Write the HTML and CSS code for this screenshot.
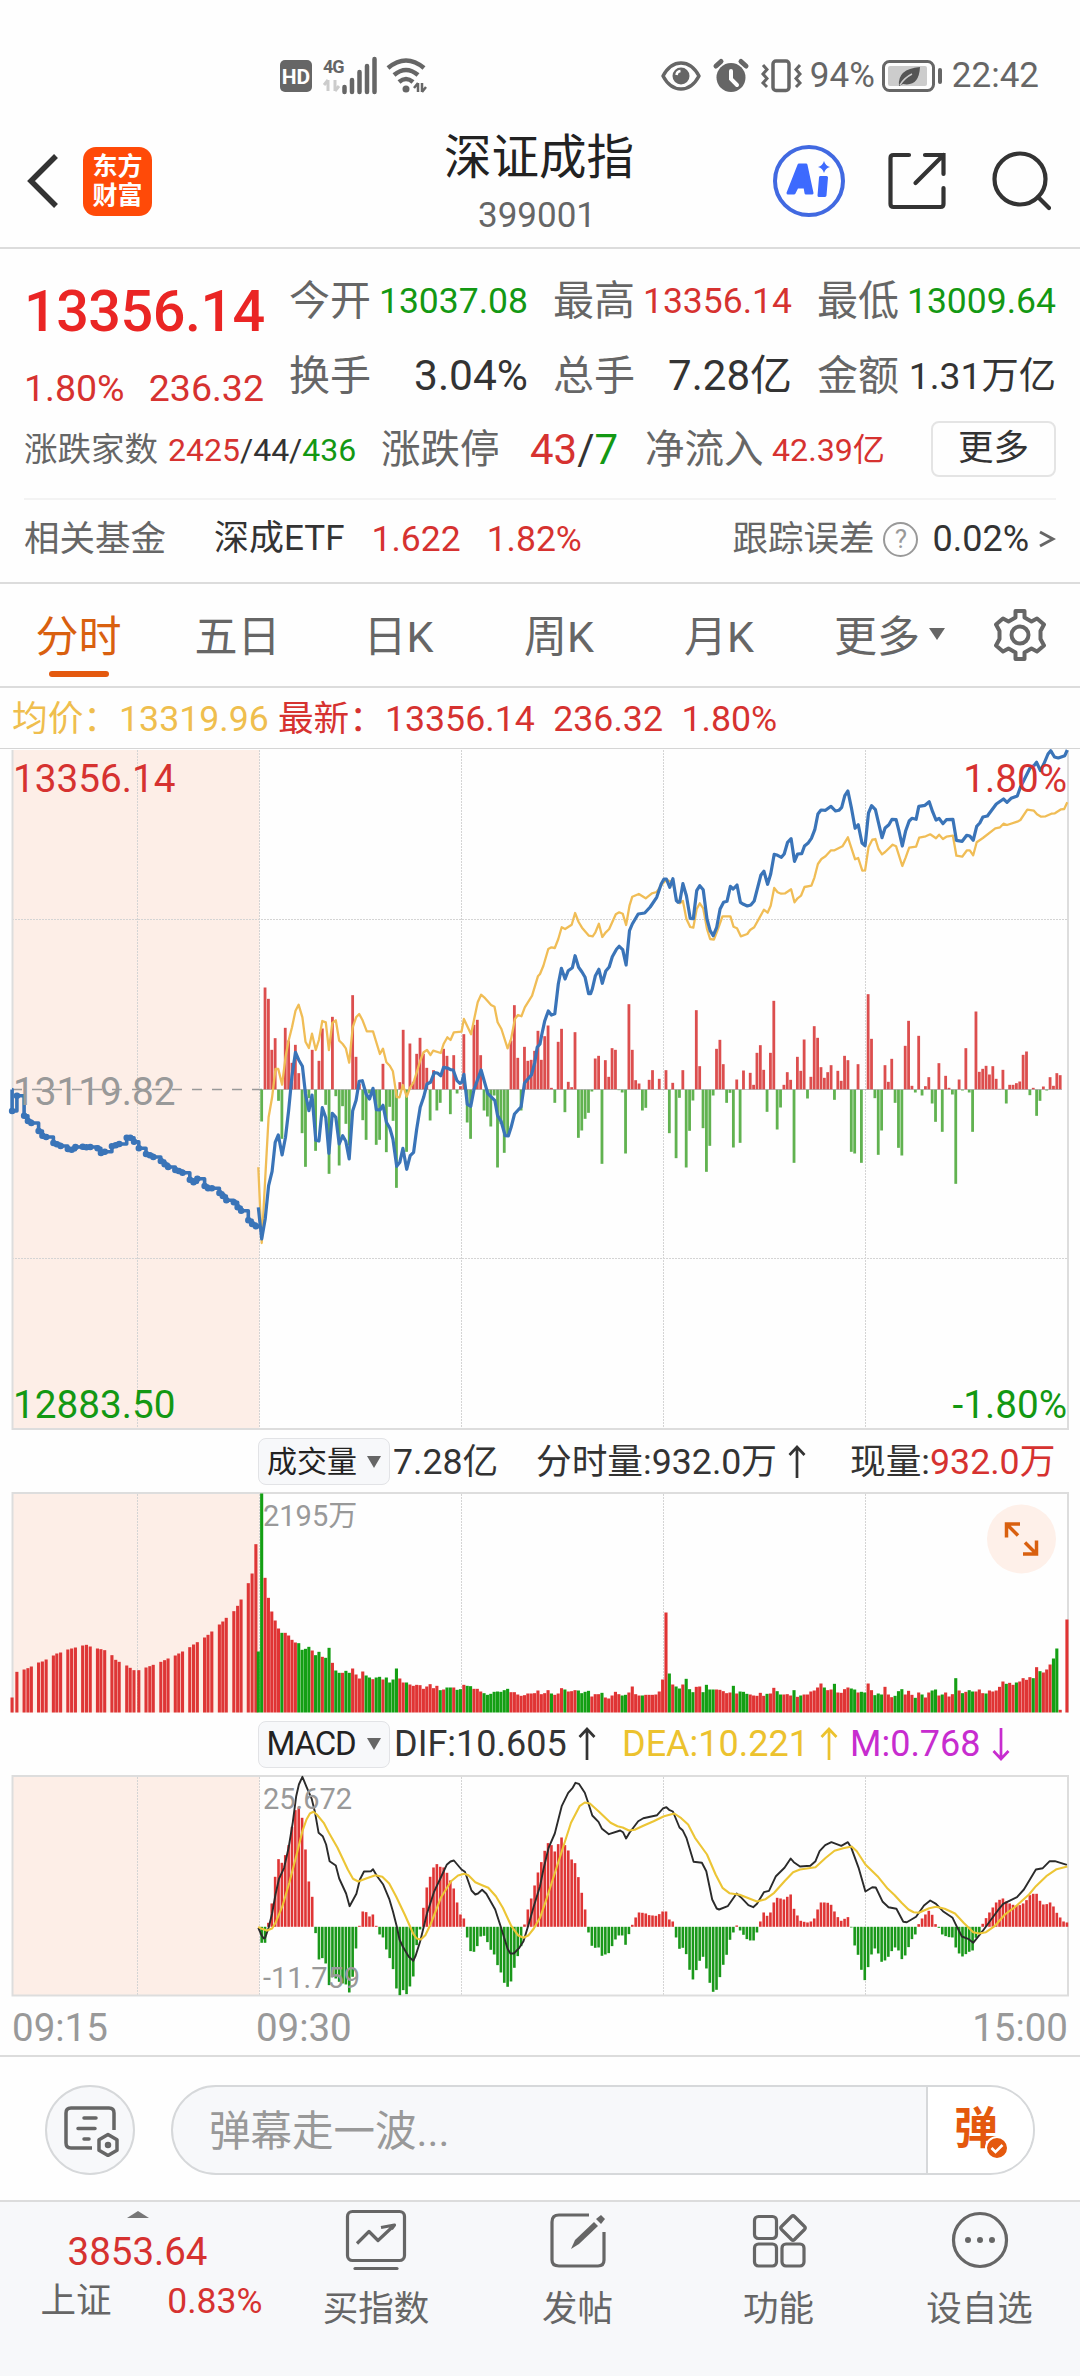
FILE: index.html
```html
<!DOCTYPE html>
<html lang="zh-CN">
<head>
<meta charset="utf-8">
<title>深证成指 399001</title>
<link rel="stylesheet" href="styles.css">
</head>
<body>
<div class="app">
  <header class="status">
    <div class="status-left">
      <svg width="150" height="42" viewBox="0 -4 150 42">
        <rect x="1" y="3" width="32" height="32" rx="5" fill="#666"/>
        <text x="17" y="27" text-anchor="middle" class="hd">HD</text>
        <text x="44" y="16" class="net">4G</text>
        <path d="M49 23v11M49 23l-4 5M56 23v11M56 34l4-5" stroke="#ccc" stroke-width="3" fill="none"/>
        <path d="M65.500 30v5M73 23v12M80.500 15v20M88 9v26M95.500 2v33" stroke="#666" stroke-width="4.500" stroke-linecap="round"/>
        <path d="M109 11q18-15 36 0M115 18q12-10 24 0M120 25q7-6 14 0" stroke="#666" stroke-width="4.500" fill="none"/>
        <circle cx="127" cy="32" r="3.500" fill="#666"/>
        <path d="M139 26v9M139 26l-4 5M143 26v9M143 35l4-5" stroke="#666" stroke-width="2.500" fill="none"/>
      </svg>
    </div>
    <div class="status-right">
      <svg width="144" height="38" viewBox="0 0 144 38">
        <path d="M2 19q7-13 18-13t18 13q-7 13-18 13T2 19Z" fill="none" stroke="#666" stroke-width="3.500" stroke-linejoin="round"/>
        <circle cx="20" cy="19" r="8.500" fill="#666"/><path d="M15.500 18a4.500 4.500 0 0 1 4-4" stroke="#fff" stroke-width="2.500" fill="none"/>
        <circle cx="70" cy="20.500" r="14.500" fill="#666"/>
        <path d="M70 14v8l6 6" stroke="#fff" stroke-width="4" fill="none" stroke-linecap="round"/>
        <path d="M55 9l5-4.500M85 9l-5-4.500" stroke="#666" stroke-width="5" stroke-linecap="round"/>
        <rect x="112" y="4" width="16" height="29.500" rx="3" fill="none" stroke="#666" stroke-width="3.500"/>
        <path d="M102 8l4 4.500-4 4.500 4 4.500-4 4.500 4 4M139 8l-4 4.500 4 4.500-4 4.500 4 4.500-4 4" stroke="#666" stroke-width="3" fill="none"/>
      </svg>
      <span class="status-text battery-text">94%</span>
      <svg width="60" height="34" viewBox="0 0 60 34">
        <rect x="1.500" y="2.500" width="50" height="29" rx="6" fill="none" stroke="#666" stroke-width="3"/>
        <rect x="6" y="7" width="39" height="20" rx="2" fill="#ccc"/>
        <path d="M17 27q-2-17 21-19q-1 20-17 17z" fill="#555"/><path d="M18 26q4-7 12-11" stroke="#ccc" stroke-width="1.500" fill="none"/>
        <path d="M58 11v12" stroke="#666" stroke-width="4" stroke-linecap="round"/>
      </svg>
      <span class="status-text clock">22:42</span>
    </div>
  </header>

  <div class="titlebar">
    <div class="title-left">
      <svg width="34" height="58" viewBox="0 0 34 58"><path d="M31 4L6 29l25 25" fill="none" stroke="#333" stroke-width="5.500"/></svg>
      <div class="brand"><span>东方</span><span>财富</span></div>
    </div>
    <div class="title-mid">
      <h1>深证成指</h1>
      <p>399001</p>
    </div>
    <div class="title-right">
      <svg width="72" height="72" viewBox="0 0 72 72">
        <circle cx="36" cy="36" r="34" fill="none" stroke="#4169e1" stroke-width="4"/>
        <path d="M26 20h7l6 28h-6l-1-6h-8l-3 6h-6zM26.500 36h4l-1-7z" fill="#3d6afe" fill-rule="evenodd" stroke="#3d6afe" stroke-width="3" stroke-linejoin="round"/>
        <path d="M47.500 32.500h6l-1.500 18h-6z" fill="#3d6afe" stroke="#3d6afe" stroke-width="3" stroke-linejoin="round"/>
        <path d="M51 16q1.500 5 6 6q-4.500 1-6 6q-1.500-5-6-6q4.500-1 6-6z" fill="#3d6afe"/>
      </svg>
      <svg width="60" height="60" viewBox="0 0 60 60" fill="none" stroke="#333" stroke-width="4.200">
        <path d="M22 4H6.500Q3.500 4 3.500 7v46q0 3 3 3h47q3 0 3-3V37M38 4h18.500v19M56.500 4L28.500 32" stroke-linecap="round"/>
      </svg>
      <svg width="60" height="62" viewBox="0 0 60 62" fill="none" stroke="#333" stroke-width="4.200" stroke-linecap="round">
        <circle cx="29" cy="29" r="25.500"/><path d="M47 47l11 11"/>
      </svg>
    </div>
  </div>

  <section class="quote">
    <div class="quote-top">
      <div class="quote-main">
        <div class="last red">13356.14</div>
        <div class="change red"><span>1.80%</span><span>236.32</span></div>
      </div>
      <div class="quote-grid">
        <div class="cell"><span class="label">今开</span><b class="v36 green">13037.08</b></div>
        <div class="cell"><span class="label">最高</span><b class="v36 red">13356.14</b></div>
        <div class="cell"><span class="label">最低</span><b class="v36 green">13009.64</b></div>
        <div class="cell"><span class="label">换手</span><b class="v43">3.04%</b></div>
        <div class="cell"><span class="label">总手</span><b class="v41">7.28亿</b></div>
        <div class="cell"><span class="label">金额</span><b class="v37">1.31万亿</b></div>
      </div>
    </div>
    <div class="breadth">
      <span class="lab-s">涨跌家数</span>
      <span class="updown"><i class="red">2425</i>/44/<i class="green">436</i></span>
      <span class="lab-m">涨跌停</span>
      <span class="limit"><i class="red">43</i>/<i class="green">7</i></span>
      <span class="lab-m">净流入</span>
      <span class="inflow red">42.39亿</span>
      <span class="more">更多</span>
    </div>
    <div class="fund">
      <span class="grey">相关基金</span>
      <span class="etf">深成ETF</span>
      <span class="red etf-price">1.622</span>
      <span class="red">1.82%</span>
      <span class="grey track">跟踪误差</span>
      <span class="help">?</span>
      <span class="err">0.02%</span>
      <svg width="18" height="20" viewBox="0 0 18 20"><path d="M2 3l13 7-13 7" fill="none" stroke="#666" stroke-width="3"/></svg>
    </div>
  </section>

  <nav class="tabs">
    <span class="tab active">分时</span>
    <span class="tab">五日</span>
    <span class="tab">日K</span>
    <span class="tab">周K</span>
    <span class="tab">月K</span>
    <span class="tab tab-more">更多<i class="caret"></i></span>
    <svg class="gear" width="54" height="54" viewBox="0 0 54 54" fill="none" stroke="#666" stroke-width="4" stroke-linejoin="round">
      <path d="M22.500 3h9v6.500l7 4 5.500-3 7 6-3.500 6.500v8l3.500 6.500-7 6-5.500-3-7 4V51h-9v-6.500l-7-4-5.500 3-7-6 3.500-6.500v-8L3 16.500l7-6 5.500 3 7-4z"/>
      <circle cx="27" cy="27" r="8.500"/>
    </svg>
  </nav>

  <div class="legend">
    <span class="avg">均价：13319.96</span>
    <span class="red now">最新：13356.14</span>
    <span class="red">236.32</span>
    <span class="red">1.80%</span>
  </div>

  <svg class="chart" width="1080" height="682" viewBox="0 749 1080 682">
    <rect x="12" y="751" width="247.500" height="679" class="auction"/>
    <path class="grid" d="M137.500 751V1430M259.500 751V1430M461.500 751V1430M663.500 751V1430M865.500 751V1430M12 920.500H1068M12 1259.500H1068"/>
    <path class="frame" d="M12.500 751V1430H1068V751"/>
    <path d="M0 749.500H1080" stroke="#d5d5d5"/>
    <path d="M12 1090.500H262" stroke="#999" stroke-width="1.500" stroke-dasharray="10 10"/>
    <g id="force"></g>
    <path d="M262 1090.500H1062" stroke="#999" stroke-width="1" opacity=".6"/>
    <path id="avg" class="line" stroke="#f0bd56" stroke-width="2.300"/>
    <path id="auction" class="line" stroke="#3a74b8" stroke-width="3.600"/>
    <path id="auctionDots" class="line" stroke="#3a74b8" stroke-width="6.500" stroke-linecap="round"/>
    <path id="price" class="line" stroke="#3a74b8" stroke-width="3.200"/>
    <text x="13" y="793" class="axis red">13356.14</text>
    <text x="13" y="1106" class="axis muted">13119.82</text>
    <text x="13" y="1419" class="axis green">12883.50</text>
    <text x="1067" y="793" text-anchor="end" class="axis red">1.80%</text>
    <text x="1067" y="1419" text-anchor="end" class="axis green">-1.80%</text>
  </svg>

  <div class="ind-head">
    <span class="picker">成交量<i class="caret"></i></span>
    <span class="vol-total">7.28亿</span>
    <span class="vol-min">分时量:932.0万<svg class="arrow" width="18" height="34" viewBox="0 0 18 34"><path d="M9 33V2M1.500 10L9 2l7.500 8"/></svg></span>
    <span class="vol-now">现量:<i class="red">932.0万</i></span>
  </div>

  <svg class="chart" width="1080" height="222" viewBox="0 1492.500 1080 222">
    <rect x="12" y="1493" width="247.500" height="220" class="auction"/>
    <path class="grid" d="M137.500 1494V1713M259.500 1494V1713M461.500 1494V1713M663.500 1494V1713M865.500 1494V1713"/>
    <path class="frame" d="M12.500 1713V1493.500H1068V1713"/>
    <g id="volume"></g>
    <text x="263" y="1526" class="scale">2195万</text>
    <circle cx="1021.500" cy="1539.500" r="34.500" fill="#fef0e9"/>
    <path d="M1018 1536l-11-11M1006.500 1538v-13.500H1020M1025 1543l11 11M1036.500 1541v13.500H1023" fill="none" stroke="#d9600f" stroke-width="3.500"/>
  </svg>

  <div class="ind-head macd-head">
    <span class="picker">MACD<i class="caret"></i></span>
    <span class="dif">DIF:10.605<svg class="arrow" width="18" height="34" viewBox="0 0 18 34"><path d="M9 33V2M1.500 10L9 2l7.500 8"/></svg></span>
    <span class="dea">DEA:10.221<svg class="arrow" width="18" height="34" viewBox="0 0 18 34"><path d="M9 33V2M1.500 10L9 2l7.500 8"/></svg></span>
    <span class="macd">M:0.768<svg class="arrow" width="18" height="34" viewBox="0 0 18 34"><path d="M9 1v31M1.500 24L9 32l7.500-8"/></svg></span>
  </div>

  <svg class="chart" width="1080" height="222" viewBox="0 1775.500 1080 222">
    <rect x="12" y="1776" width="247.500" height="220" class="auction"/>
    <path class="grid" d="M137.500 1777V1995M259.500 1777V1995M461.500 1777V1995M663.500 1777V1995M865.500 1777V1995"/>
    <path class="frame" d="M12.500 1776.500H1068V1996H12.500Z"/>
    <g id="macdBars"></g>
    <path id="dif" class="line" stroke="#2b2b2b" stroke-width="1.900"/>
    <path id="dea" class="line" stroke="#ecc535" stroke-width="2.100"/>
    <text x="263" y="1809" class="scale">25.672</text>
    <text x="263" y="1988" class="scale">-11.759</text>
  </svg>

  <div class="times"><span>09:15</span><span class="open">09:30</span><span class="close">15:00</span></div>

  <div class="danmu">
    <div class="danmu-set">
      <svg width="58" height="54" viewBox="0 0 58 54" fill="none" stroke="#666" stroke-width="3.500" stroke-linejoin="round">
        <path d="M31 45H10q-5 0-5-5V10q0-5 5-5h38q5 0 5 5v17"/>
        <path d="M23 15h12M17 25.500h17M23 36h5" stroke-linecap="round"/>
        <path d="M47 31.500l9 5.200v10.600L47 52.500l-9-5.200V36.700z"/><circle cx="47" cy="42" r="1.500"/>
      </svg>
    </div>
    <div class="danmu-input">
      <span class="placeholder">弹幕走一波...</span>
      <span class="danmu-btn">弹<svg class="tick" width="24" height="24" viewBox="0 0 24 24"><circle cx="12" cy="12" r="11" fill="#e4590e" stroke="#fff" stroke-width="2"/><path d="M6.500 12l4 4 7-7" fill="none" stroke="#fff" stroke-width="2.600"/></svg></span>
    </div>
  </div>

  <footer class="bottom">
    <div class="mini">
      <i class="up"></i>
      <div class="mini-val red">3853.64</div>
      <div class="mini-row"><span>上证</span><span class="red">0.83%</span></div>
    </div>
    <div class="item">
      <svg width="62" height="62" viewBox="0 0 62 62" fill="none" stroke="#666" stroke-width="3.200">
        <rect x="2.500" y="2.500" width="57" height="49" rx="5"/><path d="M10 59.500h42" stroke-linecap="round"/>
        <path d="M12 34.500l12-12 9 9L49 16.500M36 18.500l13.500-2.500-3 4" stroke-linejoin="round"/>
      </svg><span>买指数</span>
    </div>
    <div class="item">
      <svg width="62" height="62" viewBox="0 0 62 62" fill="none" stroke="#666" stroke-width="3.200">
        <path d="M42 6H12q-7 0-7 7v38q0 6 7 6h39q6 0 6-6V23"/><path d="M24 40l4-9L47 13l4 4-19 18z" fill="#666" stroke="none"/><path d="M49 10l5-4 4 4-4 5z" fill="#666" stroke="none"/>
      </svg><span>发帖</span>
    </div>
    <div class="item">
      <svg width="62" height="62" viewBox="0 0 62 62" fill="none" stroke="#666" stroke-width="3.200">
        <rect x="6.500" y="7.500" width="22" height="22" rx="4"/><rect x="6.500" y="35" width="22" height="22" rx="4"/><rect x="34" y="35" width="22" height="22" rx="4"/>
        <path d="M43.500 7.500q1.500-1.500 3 0l10 10q1.500 1.500 0 3l-10 10q-1.500 1.500-3 0l-10-10q-1.500-1.500 0-3z"/>
      </svg><span>功能</span>
    </div>
    <div class="item">
      <svg width="62" height="62" viewBox="0 0 62 62" fill="none" stroke="#666" stroke-width="3.200">
        <circle cx="31" cy="31" r="26.500"/><g fill="#666" stroke="none"><circle cx="19" cy="31" r="3"/><circle cx="31" cy="31" r="3"/><circle cx="43" cy="31" r="3"/></g>
      </svg><span>设自选</span>
    </div>
  </footer>
</div>
<script src="charts.js"></script>
</body>
</html>
```
FILE: styles.css
```css
* { box-sizing: border-box; }
body { margin: 0; background: #fff; }
i { font-style: normal; }
b { font-weight: 400; }
.app {
  width: 1080px; height: 2376px; display: flex; flex-direction: column; overflow: hidden;
  font-family: Roboto, "Noto Sans CJK SC", sans-serif; color: #333; background: #fefefe;
  white-space: nowrap;
}
.app > * { flex: none; }
svg { display: block; flex: none; }
.red { color: #d63230; fill: #d63230; }
.green { color: #139813; fill: #139813; }
.grey { color: #666; }
.muted { fill: #999; }

.status { height: 110px; padding: 40px 41px 0 279px; display: flex; justify-content: space-between; }
.status-left { padding-top: 13px; }
.status-right { display: flex; align-items: center; height: 70px; color: #666; padding-top: 2px; }
.status-text { font-size: 35px; line-height: 60px; }
.battery-text { margin: 0 7px 0 5px; }
.clock { margin-left: 10px; }
.hd { font: 700 21px Roboto; fill: #fff; }
.net { font: 700 18px Roboto; fill: #666; letter-spacing: -1px; }

.titlebar { height: 139px; border-bottom: 2px solid #dcdcdc; display: grid; grid-template-columns: 400px 274px 1fr; }
.title-left { display: flex; align-items: center; padding: 3px 0 0 25px; height: 145px; margin-top: -3px; }
.brand {
  width: 69px; height: 69px; margin-left: 24px; border-radius: 13px; background: #ff4a08; color: #fff;
  display: flex; flex-direction: column; align-items: center; justify-content: center;
  font-size: 25px; line-height: 29px; font-weight: 700;
}
.title-mid { text-align: center; }
.title-mid h1 { margin: 16px 0 0; font-size: 47.500px; line-height: 64px; font-weight: 400; color: #222; padding-left: 4px; }
.title-mid p { margin: 6px 0 0; font-size: 35px; line-height: 40px; color: #666; }
.title-right { display: flex; align-items: center; padding-left: 99px; height: 142px; }
.title-right svg + svg { margin-left: 42px; }
.title-right svg + svg + svg { margin-left: 44px; }

.quote { height: 335px; border-bottom: 2px solid #dcdcdc; padding: 14px 24px 0; }
.quote-top { display: flex; height: 151px; }
.quote-main { width: 265px; padding-top: 12px; }
.last { font-size: 57.500px; line-height: 74px; font-weight: 500; color: #ea2524; letter-spacing: -.5px; }
.change { width: 240px; display: flex; justify-content: space-between; font-size: 37.500px; line-height: 50px; padding-top: 14px; }
.quote-grid { display: grid; grid-template-columns: repeat(3, 239px); column-gap: 25px; grid-auto-rows: 75.500px; flex: 1; }
.cell { display: flex; justify-content: space-between; align-items: center; line-height: 74px; }
.label { font-size: 41px; color: #666; }
.v36 { font-size: 35.500px; } .v37 { font-size: 37.300px; } .v41 { font-size: 42px; } .v43 { font-size: 42.500px; }
.breadth { height: 85px; display: flex; align-items: center; line-height: 60px; padding-bottom: 14px; }
.lab-s { font-size: 33.500px; color: #666; width: 144px; }
.updown { font-size: 32px; width: 213px; }
.lab-m { font-size: 39.500px; color: #666; width: 118px; }
.limit { font-size: 42px; width: 146px; padding-left: 31px; }
.inflow { font-size: 32.200px; padding-left: 9px; }
.more { width: 125px; height: 56px; margin-left: auto; border: 2px solid #e4e4e4; border-radius: 8px; font-size: 35.500px; line-height: 51px; text-align: center; position: relative; top: -1px; }
.fund { height: 83px; border-top: 2px solid #f3f3f3; display: flex; align-items: center; font-size: 35.500px; line-height: 60px; padding-bottom: 3px; margin-top: -1px; }
.etf { margin-left: 48px; font-size: 35px; }
.etf-price { margin: 0 26px 0 27px; }
.track { margin-left: auto; }
.help { width: 35px; height: 35px; margin: 0 14px 0 9px; border: 2.500px solid #999; border-radius: 50%; color: #999; font-size: 26px; line-height: 31px; text-align: center; }
.err { margin-right: 9px; font-size: 36px; }

.tabs { height: 104px; border-bottom: 2px solid #dcdcdc; display: grid; grid-template-columns: 157px 161px 161px 160px 160px 181px 1fr; align-items: center; color: #666; font-size: 43px; }
.tab { text-align: center; line-height: 98px; padding-top: 4px; }
.active { color: #d9600f; position: relative; }
.active::after { content: ""; position: absolute; left: 49px; bottom: 9px; width: 60px; height: 6px; border-radius: 3px; background: #e4590e; }
.tab-more { display: flex; align-items: center; justify-content: center; }
.caret { border: 8px solid transparent; border-top: 12px solid #666; border-bottom: 0; margin-left: 9px; }
.tab-more .caret { margin-top: -6px; }
.gear { margin-left: 13px; }

.legend { height: 60px; display: flex; align-items: center; font-size: 35.700px; line-height: 60px; padding: 1px 0 0 12px; }
.legend .avg { color: #efbe4e; }
.now { margin-left: 9px; }
.legend .red + .red { margin-left: 18.500px; }

.auction { fill: #fdeee7; }
.grid { fill: none; stroke: #d4d4d4; stroke-width: 1; stroke-dasharray: 2 1; shape-rendering: crispEdges; }
.frame { fill: none; stroke: #ddd; stroke-width: 2; }
.line { fill: none; stroke-linejoin: round; }
.axis { font-size: 38.700px; }
.scale { font-size: 29px; fill: #999; }

.ind-head { height: 61.500px; display: flex; align-items: center; padding: 2px 0 0 258px; font-size: 36px; line-height: 58px; }
.macd-head { height: 61px; }
.picker { width: 132px; height: 47px; border: 1.500px solid #e2e3e6; border-radius: 8px; background: #f7f8fa; font-size: 30px; line-height: 44px; color: #222; display: flex; align-items: center; justify-content: center; }
.picker .caret { border-width: 12px 7px 0; margin-left: 10px; }
.macd-head { padding-top: 0; }
.macd-head .picker { font-size: 33px; letter-spacing: -1.200px; }
.macd-head .caret { margin-left: 12px; }
.vol-total { width: 146px; padding-left: 3px; font-size: 35.700px; }
.vol-min { width: 314px; display: flex; align-items: center; font-size: 35.700px; }
.vol-now { font-size: 35.700px; }
.arrow { margin-left: 11px; fill: none; stroke: currentColor; stroke-width: 2.700; }
.dif, .dea, .macd { display: flex; align-items: center; }
.dif { width: 232px; padding-left: 4px; }
.dea { width: 228px; color: #ecc22e; }
.macd { color: #c72ccf; }

.times { height: 60px; border-bottom: 2px solid #dcdcdc; display: flex; color: #999; font-size: 38.500px; line-height: 62px; padding: 0 12px; }
.open { margin-left: 148px; }
.close { margin-left: auto; }

.danmu { height: 143px; display: flex; padding: 28px 45px 0; }
.danmu-set { width: 90px; height: 90px; border: 2px solid #d6d8da; border-radius: 50%; background: #f7f8fa; display: flex; align-items: center; justify-content: center; }
.danmu-input { width: 864px; height: 90px; margin-left: 36px; border: 2px solid #d6d8da; border-radius: 45px; overflow: hidden; background: #f7f8fa; display: flex; justify-content: space-between; }
.placeholder { padding-left: 36px; font-size: 41.500px; line-height: 89px; color: #999; }
.danmu-btn { position: relative; width: 107px; border-left: 2px solid #d6d8da; background: #fff; color: #e4590e; font-size: 44px; line-height: 84px; font-weight: 700; padding-left: 26px; }
.tick { position: absolute; left: 57px; top: 49px; }

.bottom { flex: 1 0 auto; border-top: 2px solid #dcdcdc; background: #f7f8fa; display: grid; grid-template-columns: 275px 202px 201px 201px 201px; color: #666; }
.mini { display: flex; flex-direction: column; align-items: center; }
.up { border: 11px solid transparent; border-bottom: 7px solid #777; border-top: 0; margin-top: 9px; }
.mini-val { font-size: 38.500px; line-height: 50px; margin-top: 9px; }
.mini-row { width: 222px; margin-left: 28px; display: flex; justify-content: space-between; font-size: 35.500px; line-height: 48px; }
.item { display: flex; flex-direction: column; align-items: center; padding-top: 7px; font-size: 35.500px; line-height: 50px; }
.item span { margin-top: 13px; }
```
FILE: charts.js
```js
// Horizontal step is one trading minute; line points are [x, y] in plot units.
const SX = 2.9037, SY = 3, STEP = 3.3693, OPEN = 258.3;
const NS = "http://www.w3.org/2000/svg";
const el = id => document.getElementById(id);
const nums = s => s.trim().split(/[\s,|]+/).map(Number);

function bar(g, x, base, h, color, w) {
  const r = document.createElementNS(NS, "rect");
  r.setAttribute("x", (x - w / 2).toFixed(2));
  r.setAttribute("y", (h > 0 ? base - h : base).toFixed(2));
  r.setAttribute("width", w);
  r.setAttribute("height", Math.abs(h).toFixed(2));
  r.setAttribute("fill", color);
  g.appendChild(r);
}
function signed(id, base, data, up, down, w) {
  nums(data).forEach((v, n) => v && bar(el(id), OPEN + STEP * (n + 1), base, v / SY, v > 0 ? up : down, w));
}
function line(id, top, am, pm) {
  let d = "";
  [am, pm].forEach((half, k) => {
    const p = nums(half);
    for (let i = 0; i < p.length; i += 2)
      d += (d ? "L" : "M") + (k * 540 + p[i] / SX).toFixed(1) + " " + (top + p[i + 1] / SY).toFixed(1);
  });
  el(id).setAttribute("d", d);
}

signed("force", 1090.5, `
-96 306 272 119 154 -34 -148 185 147 80 134 49 -131 -232 -26 119 -184 86 183 -46
-253 218 -20 -228 -50 -103 -168 283 98 17 -92 -151 -12 -8 -166 -151 77 -188 -52 -94
-295 22 179 -187 138 23 107 155 107 65 -93 58 -63 -40 122 101 -74 103 -12 10
166 -99 -148 194 209 103 -63 -81 -111 -18 -234 -103 -190 -138 147 253 95 -63 128 86
89 116 176 89 160 192 5 -40 143 182 -68 23 7 172 -145 -123 -88 -70 -6 93
101 -223 88 38 124 119 -2 -9 -192 256 119 28 18 -63 -55 29 58 0 32 0
58 -131 20 -206 -25 58 -234 -124 -33 238 70 -116 -247 -169 -18 122 149 76 -40 -10
-174 30 -160 57 0 50 14 110 133 59 -67 110 266 -120 -54 14 52 29 -220 98
56 150 -27 38 190 155 67 35 52 73 -31 56 26 101 88 -187 -192 76 -220 0
286 152 -26 -196 -123 73 23 92 -40 -175 -198 131 206 11 -9 161 -18 10 37 -42
-97 79 -127 41 5 -15 -283 30 -3 124 -9 -127 234 53 62 71 45 70 32 2
59 -42 14 14 19 24 104 114 -17 5 -79 -34 9 -3 37 11 49 43`, "#dc4e4e", "#61b250", 2.8);

signed("macdBars", 1927.3, `
-48 -48 12 70 150 203 192 215 245 300 350 358 327 232 136 90 -19 -98 -94 -110
-175 -150 -155 -165 -170 -173 -197 -150 -65 3 46 44 31 37 3 -23 -32 -68 -94 -127
-185 -205 -190 -202 -179 -149 -55 -8 57 118 150 178 188 180 178 162 139 115 73 37
25 -32 -73 -75 -58 -29 -27 -46 -69 -83 -115 -137 -168 -180 -164 -123 -88 -58 7 52
85 124 163 194 228 251 245 226 248 268 245 229 202 191 149 102 52 -17 -57 -63
-62 -87 -83 -79 -58 -38 -26 -26 -54 -22 6 28 43 42 40 35 34 33 38 46
46 22 16 -32 -66 -63 -82 -129 -158 -130 -102 -90 -125 -168 -195 -189 -151 -114 -84 -39
-17 4 -11 -24 -37 -41 -41 -17 16 43 33 43 73 87 85 82 90 97 54 34
18 15 13 16 25 52 73 73 72 66 46 29 18 24 29 -2 -56 -84 -129 -160
-121 -83 -65 -80 -105 -101 -90 -73 -62 -71 -97 -86 -61 -37 -23 8 25 37 48 36
8 -3 -23 -28 -31 -32 -62 -80 -89 -82 -75 -71 -33 -20 9 26 43 58 73 81
85 76 70 66 63 65 70 80 95 99 99 78 67 68 73 61 42 28 16 13`, "#df3535", "#1a981a", 2.6);

// Call-auction samples: x, volume height, indicative price level.
const auctionX = nums(`35 49 70 81 91 112 123 134 155 165 176 197 208 219 240 251 262 283 293 304
325 336 346 368 378 389 403 424 435 445 467 478 488 509 519 530 551 562 573 594 604 615
637 647 657 679 690 700 721 732 743`);
const auctionVol = nums(`45 122 129 133 138 150 153 159 171 177 180 189 192 195 201 203 198 192 190 187
172 158 152 141 134 127 127 135 139 143 152 157 162 171 177 183 196 204 211 225 233 243
264 273 284 304 320 339 388 417 505`);
const auctionY = nums(`1116 1070 1130 1146 1152 1176 1190 1194 1212 1216 1221 1230 1232 1224 1223 1225 1224 1228 1242 1238
1222 1219 1215 1196 1196 1208 1228 1245 1249 1254 1266 1276 1284 1293 1296 1301 1322 1330 1319 1341 1348 1348
1362 1371 1384 1390 1405 1415 1444 1455 1462`);
let step = "M12 1090.5", dots = "";
auctionX.forEach((x, n) => {
  const px = (x / SX).toFixed(1), py = (740 + auctionY[n] / SY).toFixed(1);
  step += `H${px}V${py}`;
  dots += `M${px} ${py}h.1`;
  bar(el("volume"), x / SX, 1713, auctionVol[n] / SY, "#de3636", 3.1);
});
el("auction").setAttribute("d", step);
el("auctionDots").setAttribute("d", dots);

// Minute volumes from 09:30; a trailing g marks a falling minute.
`183g 657g 404 344 303 276 252 239g 239 231 218 210 208g 188g 191g 197g 186 172g 182g 167
164g 194g 149 126g 119g 119 125g 119g 132 114 102 123 111g 105g 100 105g 107g 99 105g 90g
99g 132g 102 90 90g 84 80 83 82 71 78 85 73 80 67g 69 75g 75g 75 68g
70g 83 80g 79g 71 71 63 58g 53g 56g 62g 63g 62g 67g 71g 61 61 54 50 52
57 57 58 66 55 58 67 57g 53 57 73 69g 63 64 67 66g 58g 62g 65g 48
55 55 59g 45 42 51 62 55 51g 53g 60 78 55 51 51g 53 53 53 54 63
99 300 117g 84 78g 72g 84 101g 70g 61g 77 78 61g 83g 69g 69g 69 68 64 58
60 80g 57 63g 62g 56g 54 51 50 59 50 56g 57 74 64g 54g 54 55 51 67g
47 51g 54 54 63 66 75 87 75g 67 69 86g 60 59 70 75 72g 69g 60 62g
60g 87 67 52g 57g 54g 77 54 46 50g 64g 70g 54 65 53 44g 60 54g 45 60
66g 69g 51 54g 60 48 55 103g 66 58g 62 67g 63g 63 69 58 57g 66 63 66
77 93 86g 89 83 90g 93 103 98 106 103g 136 124g 120 129 144 162g 192g 8 0 279`
  .trim().split(/\s+/).forEach((t, n) => {
    const h = parseInt(t, 10);
    if (h) bar(el("volume"), OPEN + STEP * n, 1713, h / SY, t.endsWith("g") ? "#149f14" : "#e03434", 3.1);
  });

line("price", 740, `750,1405 760,1500 770,1440 780,1340 790,1297 799,1210 808,1188 819,1248 829,1195 838,1115 848,1010 858,940 867,962 878,982 887,1065 897,1115 906,1068 917,1204 926,1206 936,1106 946,1136 955,1243 965,1123 975,1135 985,1215 995,1190 1004,1207 1014,1260 1024,1115 1034,1084 1043,1027 1052,1025 1063,1065 1073,1080 1083,1048 1093,1112 1103,1113 1112,1099 1122,1150 1132,1167 1141,1200 1152,1282 1161,1270 1170,1228 1181,1291 1191,1250 1201,1240 1210,1170 1220,1105 1230,1075 1240,1035 1250,1030 1261,1001 1270,1002 1280,1010 1288,985 1299,987 1308,992 1316,993 1327,1025 1335,1033 1341,1030 1347,1006 1357,1096 1367,1102 1376,1052 1397,993 1416,1063 1437,1085 1445,1130 1455,1147 1467,1190 1476,1191 1484,1165 1494,1125 1513,1103 1523,1032 1543,1008 1553,970 1560,925`,
`0,915 5,888 14,845 24,816 33,828 43,824 53,735 62,688 73,720 82,695 94,686 102,650 112,685 122,699 131,715 141,764 147,764 152,750 161,710 171,691 181,733 191,696 201,684 210,653 222,631 230,622 240,632 250,678 260,575 268,555 285,525 304,522 320,504 339,475 352,435 360,420 367,420 377,445 386,419 396,485 401,490 406,488 415,434 425,470 436,538 445,539 455,455 464,440 474,452 485,540 494,575 503,590 513,565 523,510 533,490 543,487 553,442 561,450 572,438 582,490 591,496 602,501 612,498 622,486 641,409 650,397 661,436 670,405 680,346 690,349 701,355 709,345 719,310 729,299 739,367 748,345 760,344 768,321 778,313 788,298 798,272 807,225 816,213 829,214 845,202 858,216 868,214 876,205 885,170 894,156 904,205 915,268 924,257 935,312 944,320 954,222 963,200 974,212 993,296 1002,267 1013,257 1022,241 1034,242 1042,275 1052,321 1062,275 1072,246 1080,238 1092,241 1100,202 1118,199 1130,188 1140,218 1150,243 1159,238 1170,254 1180,242 1199,241 1209,304 1226,307 1239,289 1248,291 1258,304 1268,262 1277,252 1286,234 1299,231 1325,195 1346,180 1356,190 1368,178 1386,171 1395,145 1424,85 1434,80 1442,70 1453,95 1463,75 1475,45 1483,35 1494,54 1505,57 1524,50 1531,33`);

line("avg", 740, `750,1285 760,1512 770,1320 780,1135 790,1075 800,990 808,990 819,1037 829,955 838,905 848,865 858,815 867,797 878,835 887,908 897,927 906,884 917,933 926,903 936,846 946,850 955,933 965,852 975,844 985,905 995,915 1004,928 1014,971 1024,865 1034,835 1043,825 1052,842 1065,877 1083,877 1103,945 1112,929 1122,970 1132,980 1141,997 1152,1074 1160,1075 1170,1038 1181,1073 1191,1045 1201,1030 1210,1000 1220,965 1230,940 1240,933 1250,948 1258,935 1280,942 1288,915 1299,895 1308,903 1318,880 1340,878 1347,840 1368,886 1377,840 1387,790 1397,767 1406,775 1426,798 1436,803 1445,850 1456,870 1474,928 1484,900 1495,840 1504,828 1514,832 1524,805 1545,770 1562,712`,
`0,705 10,680 24,630 33,625 43,627 53,600 63,565 73,570 92,557 102,522 112,549 122,566 142,590 153,592 161,580 171,554 181,594 191,580 201,570 220,526 230,520 240,524 250,558 260,500 268,473 287,465 307,478 325,463 339,459 355,435 367,422 386,430 396,480 406,493 415,486 425,540 436,564 445,566 455,510 464,493 474,508 485,570 494,600 505,602 515,575 530,532 553,532 562,563 572,568 583,592 602,585 610,573 622,565 650,512 661,521 670,500 680,447 690,460 700,464 712,463 729,451 739,490 748,478 758,470 768,444 788,440 797,415 807,375 817,360 829,352 845,334 855,334 878,322 894,295 915,361 924,357 936,395 944,394 954,325 965,302 974,300 983,330 993,346 1002,339 1024,317 1034,322 1052,381 1062,355 1072,326 1092,323 1101,296 1120,292 1133,286 1150,298 1159,287 1170,300 1180,293 1199,290 1209,350 1226,353 1240,334 1248,334 1258,349 1268,310 1286,297 1322,268 1336,265 1346,254 1356,258 1386,248 1395,243 1415,212 1434,215 1443,226 1455,233 1468,232 1485,224 1495,223 1513,211 1522,210 1531,190`);

line("dif", 1710, `750,655 760,678 766,687 770,685 780,655 790,612 800,555 810,508 825,475 838,415 850,340 860,260 868,225 878,202 890,232 905,268 915,310 925,370 937,380 947,405 957,455 975,468 985,507 1005,552 1015,590 1035,553 1045,510 1057,486 1077,485 1083,479 1095,500 1112,524 1130,568 1141,605 1152,650 1160,690 1170,712 1187,742 1200,754 1207,738 1220,695 1240,612 1260,548 1280,504 1297,466 1308,456 1318,453 1340,480 1350,487 1369,543 1380,555 1388,552 1400,541 1412,553 1438,600 1455,655 1474,718 1482,732 1492,732 1508,715 1520,695 1535,645 1550,590`,
`0,530 10,480 25,415 43,372 63,290 82,250 95,235 103,220 113,223 130,250 140,280 152,318 170,337 180,358 200,374 233,363 241,368 250,387 260,370 285,335 300,326 340,317 357,297 367,293 375,301 386,306 405,354 414,362 425,385 446,457 470,460 483,485 500,570 513,597 520,600 545,590 571,552 583,563 605,587 619,593 630,583 650,548 665,544 685,500 710,475 728,447 737,458 755,471 785,469 800,455 812,425 828,407 846,398 875,409 894,398 904,415 925,475 945,546 965,533 975,534 995,577 1012,593 1035,598 1055,637 1065,638 1092,622 1115,588 1133,573 1150,583 1170,605 1198,625 1212,655 1225,681 1243,688 1258,700 1285,665 1330,602 1345,583 1385,563 1405,540 1440,480 1460,476 1480,455 1495,455 1530,466`);

line("dea", 1710, `750,652 760,658 775,663 790,657 800,640 820,590 840,520 860,440 878,365 890,330 900,312 910,307 920,315 940,340 955,370 980,415 1010,480 1025,508 1040,516 1065,506 1090,497 1110,502 1130,522 1150,560 1175,615 1200,673 1210,687 1222,690 1235,677 1250,645 1280,565 1310,515 1330,498 1348,493 1360,497 1380,518 1400,527 1418,535 1440,560 1460,595 1485,650 1505,678 1520,685 1535,677 1550,657`,
`0,625 20,565 40,500 65,420 90,340 115,290 130,279 145,282 170,305 205,340 225,350 240,354 258,363 275,361 300,349 330,335 360,320 390,312 410,326 430,345 450,385 485,435 510,495 530,535 550,551 580,556 615,570 630,576 655,569 680,550 710,515 735,488 755,480 800,473 830,445 855,424 880,416 905,411 920,425 945,465 980,500 1010,538 1030,557 1050,580 1070,600 1085,608 1100,610 1130,596 1150,592 1175,598 1205,612 1230,640 1258,668 1275,672 1295,668 1320,650 1350,615 1380,592 1420,555 1440,530 1470,500 1500,479 1531,471`);
```
